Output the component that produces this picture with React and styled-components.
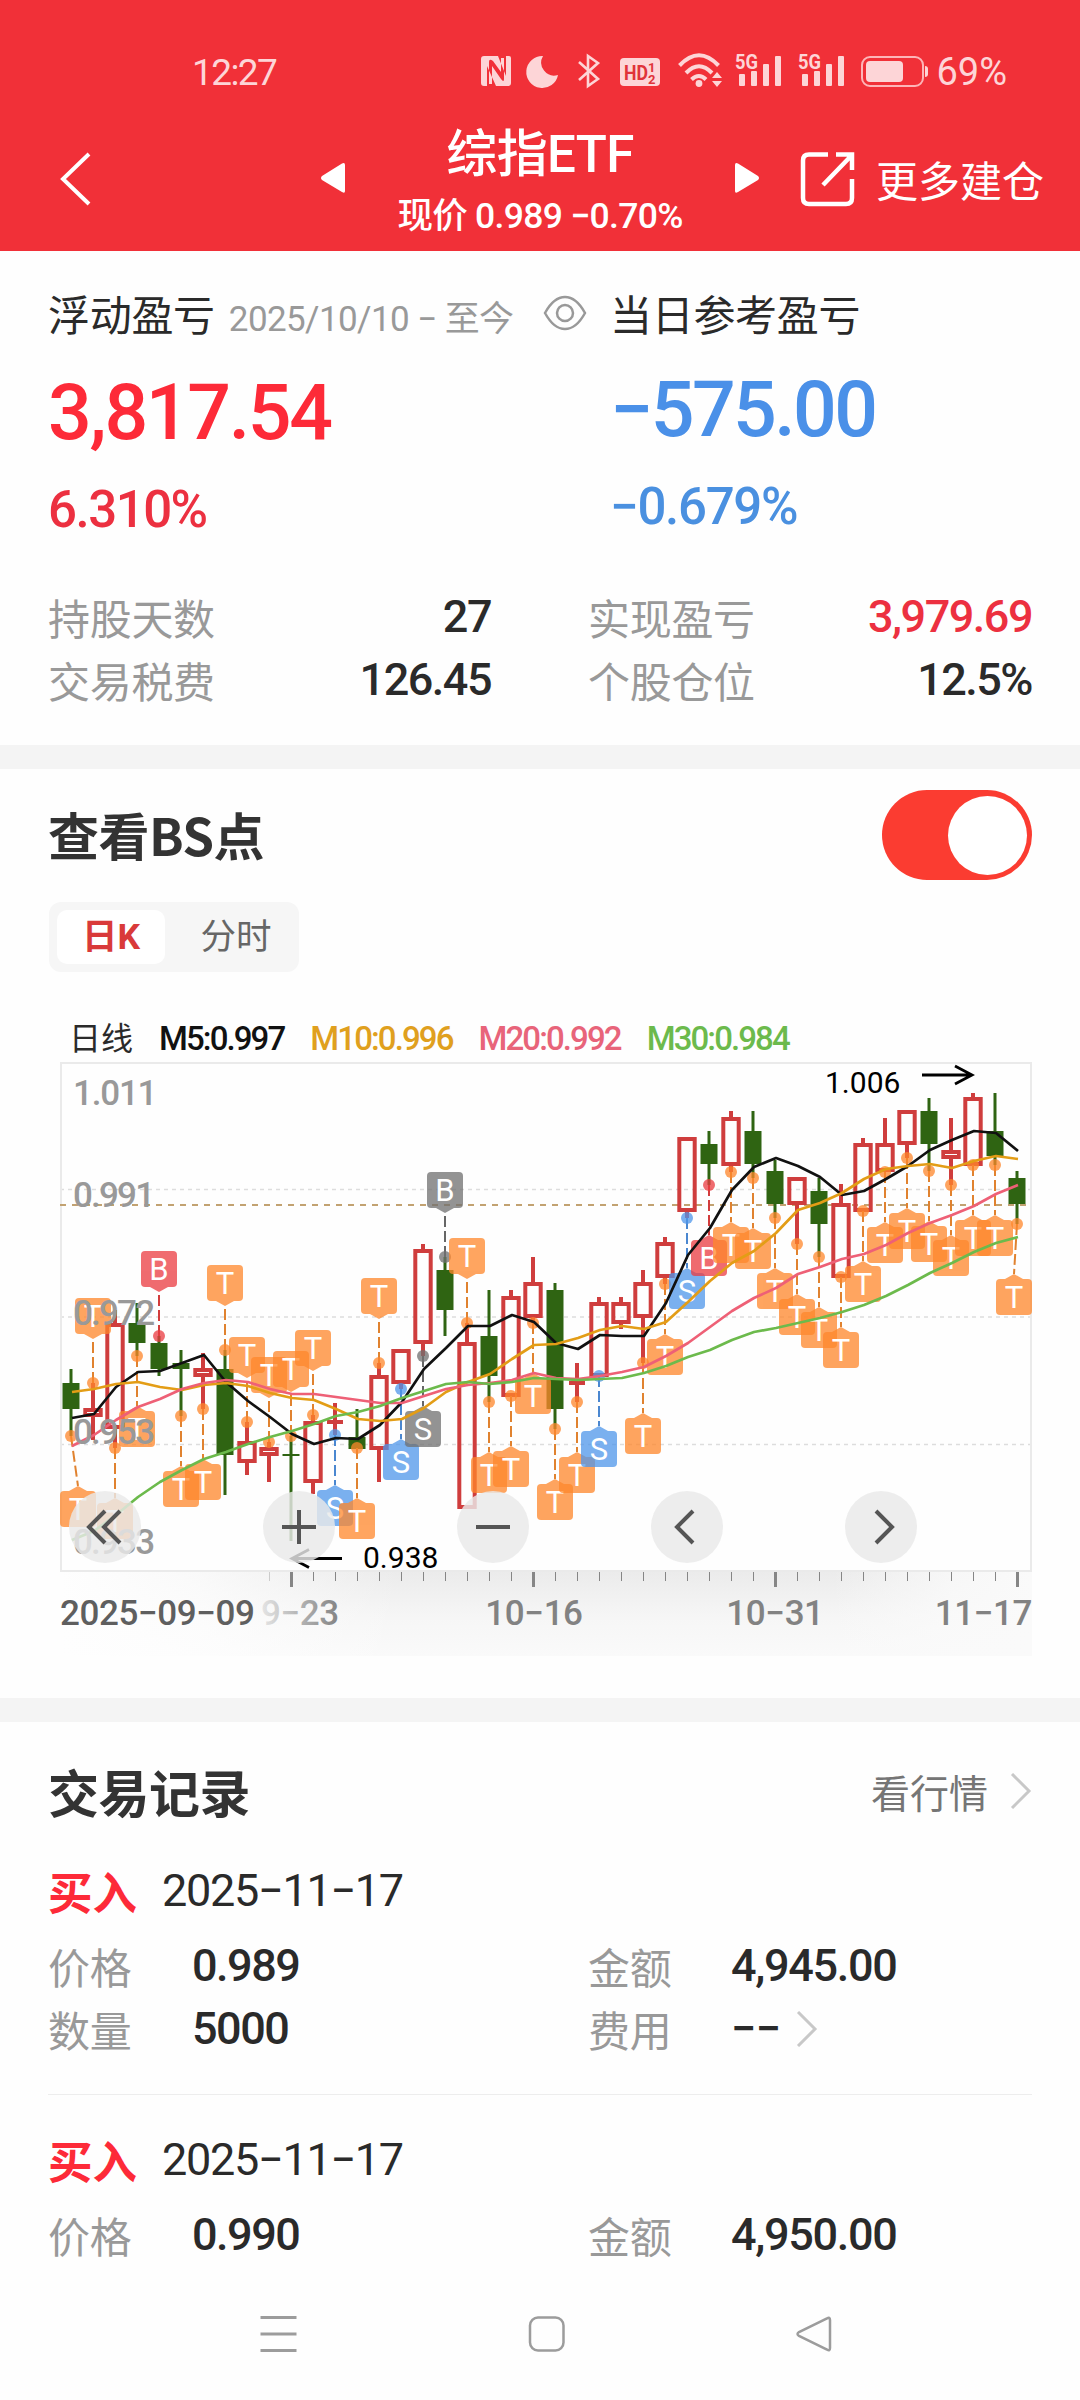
import React, { useState } from "react";
import styled, { createGlobalStyle } from "styled-components";

const GlobalStyle = createGlobalStyle`
  * {
    box-sizing: border-box;
  }
  body {
    margin: 0;
    background-color: #fff;
    font-family: "Noto Sans CJK SC", sans-serif;
    color: #2a2a2a;
  }
`;

const digits = `Roboto, "Noto Sans CJK SC", sans-serif`;

const Page = styled.div`
  width: 1080px;
  height: 2400px;
  display: flex;
  flex-direction: column;
  overflow: hidden;
  background-color: #fefefe;
`;

const Content = styled.main`
  flex: 1;
  overflow: hidden;
`;

const Num = styled.span`
  font-family: ${digits};
  font-size: ${({ $size }) => $size || 45}px;
  font-weight: ${({ $weight }) => $weight || 500};
  letter-spacing: ${({ $ls }) => $ls ?? -1.5}px;
  color: ${({ $color }) => $color || "#2a2a2a"};
  white-space: nowrap;
`;

/* header */

const Header = styled.header`
  height: 251px;
  background-color: #f13038;
  color: white;
`;

const StatusBar = styled.div`
  height: 92px;
  padding: 52px 73px 0 192px;
  display: flex;
  justify-content: space-between;
  align-items: center;
  color: #fdd5d7;
`;

const NavBar = styled.div`
  display: grid;
  grid-template-columns: 321px 24px 390px 24px 321px;
  height: 159px;
`;

const BackButton = styled.div`
  padding: 60px 0 0 60px;
`;

const Arrow = styled.div`
  padding-top: 70px;
`;

const TitleBlock = styled.div`
  display: flex;
  flex-direction: column;
  align-items: center;
  padding-top: 30px;
`;

const Title = styled.h1`
  margin: 0;
  font-family: ${digits};
  font-size: 51px;
  font-weight: 500;
  line-height: 66px;
  letter-spacing: -0.6px;
`;

const Subtitle = styled.div`
  font-family: ${digits};
  font-size: 35.5px;
  font-weight: 500;
  line-height: 57px;
  letter-spacing: -0.7px;
  white-space: pre;
`;

const More = styled.div`
  display: flex;
  align-items: center;
  gap: 21px;
  height: 54px;
  margin-top: 60px;
  padding-left: 41px;
  font-size: 42px;
  line-height: 54px;
  white-space: nowrap;
`;

/* sections */

const Section = styled.section`
  padding: ${({ $pad }) => $pad || "0 48px"};
`;

const Divider = styled.div`
  height: 24px;
  background-color: #f4f4f4;
`;

const Columns = styled.div`
  display: grid;
  grid-template-columns: 562px 1fr;
`;

const Head = styled.div`
  display: flex;
  align-items: center;
  height: 60px;
  font-size: 42px;
  line-height: 60px;
  letter-spacing: -0.3px;
  white-space: nowrap;
`;

const Period = styled.span`
  font-family: ${digits};
  font-size: 35px;
  color: #999;
  margin: 14px 30px 0 14px;
  letter-spacing: -0.6px;
`;

const Figure = styled.div`
  height: ${({ $h }) => $h}px;
  line-height: ${({ $h }) => $h + 4}px;
`;

const Stats = styled.div`
  display: grid;
  grid-template-columns: 443px 444px;
  column-gap: 97px;
  margin-top: 48px;
`;

const Stat = styled.div`
  display: flex;
  align-items: center;
  justify-content: space-between;
  height: 63px;
  line-height: 63px;
`;

const Label = styled.span`
  font-size: 42px;
  color: #999;
  letter-spacing: -0.3px;
  width: ${({ $w }) => ($w ? `${$w}px` : "auto")};
`;

const SectionHead = styled.div`
  display: flex;
  align-items: center;
  justify-content: space-between;
  height: ${({ $h }) => $h}px;
  line-height: ${({ $h }) => $h}px;
`;

const SectionTitle = styled.h2`
  margin: 0 0 2px;
  font-size: 51px;
  font-weight: 700;
  letter-spacing: -0.5px;
  color: #333;
`;

const Switch = styled.button`
  width: 150px;
  height: 90px;
  padding: 0 5px;
  border: none;
  border-radius: 45px;
  display: flex;
  align-items: center;
  justify-content: ${({ $on }) => ($on ? "flex-end" : "flex-start")};
  background-color: ${({ $on }) => ($on ? "#fb3c31" : "#ddd")};
  cursor: pointer;
`;

const Knob = styled.span`
  width: 79px;
  height: 79px;
  border-radius: 50%;
  background-color: white;
`;

const Tabs = styled.div`
  display: flex;
  width: 250px;
  height: 70px;
  margin: 22px 0 0 1px;
  padding: 8px;
  border-radius: 12px;
  background-color: #f6f6f6;
`;

const Tab = styled.button`
  flex: none;
  width: ${({ $active }) => ($active ? 108 : 142)}px;
  height: 54px;
  padding: 0;
  border: none;
  border-radius: 10px;
  font-family: ${digits};
  font-size: 35.5px;
  line-height: 55px;
  font-weight: ${({ $active }) => ($active ? 700 : 400)};
  color: ${({ $active }) => ($active ? "#d93a3a" : "#666")};
  background-color: ${({ $active }) => ($active ? "#fff" : "transparent")};
  cursor: pointer;
`;

const Legend = styled.div`
  display: flex;
  align-items: center;
  height: 50px;
  margin-top: 42px;
  padding-left: 21px;
  font-family: ${digits};
  font-size: 32px;
  line-height: 50px;
`;

const LegendItem = styled(Num)`
  margin-left: 26px;
`;

const ChartSvg = styled.svg`
  display: block;
  margin: -4px 0 0 2px;
`;

const MoreLink = styled.div`
  display: flex;
  align-items: center;
  gap: 22px;
  margin-bottom: 2px;
  font-size: 39px;
  color: #757575;
`;

const Record = styled.div`
  padding: 34px 0;
  border-bottom: 1px solid #ededed;
  &:last-child {
    border-bottom: none;
  }
`;

const RecordHead = styled.div`
  display: flex;
  align-items: center;
  gap: 25px;
  height: 62px;
  margin-bottom: 12px;
  line-height: 64px;
`;

const Side = styled.span`
  font-size: 44.5px;
  font-weight: 700;
  color: #fd2a38;
`;

const Fields = styled.div`
  display: grid;
  grid-template-columns: 540px 1fr;
`;

const Field = styled.div`
  display: flex;
  align-items: center;
  height: 63px;
  line-height: 63px;
`;

const SystemNav = styled.nav`
  display: flex;
  align-items: center;
  gap: 231px;
  height: 132px;
  padding-left: 260px;
`;

/* chart data: [up, high, low, body top, body bottom] */

const CANDLES = [
  [0, 329, 396, 343, 369], [1, 343, 400, 368, 377], [1, 270, 408, 283, 389],
  [0, 263, 316, 283, 303], [0, 296, 336, 303, 329], [0, 310, 376, 323, 329],
  [1, 313, 369, 328, 337], [0, 310, 455, 329, 415], [1, 382, 435, 401, 423],
  [1, 402, 442, 407, 416], [0, 396, 501, 414, 416], [1, 375, 454, 381, 443],
  [1, 363, 395, 381, 383], [0, 369, 408, 397, 409], [1, 323, 442, 335, 410],
  [1, 309, 349, 309, 344], [1, 204, 316, 209, 304], [0, 217, 296, 230, 270],
  [1, 283, 469, 302, 469], [0, 250, 362, 296, 336], [1, 250, 356, 256, 357],
  [1, 217, 283, 242, 278], [0, 243, 389, 250, 369], [1, 323, 362, 342, 344],
  [1, 257, 336, 262, 337], [1, 257, 289, 262, 284], [1, 230, 323, 242, 278],
  [1, 197, 244, 202, 238], [1, 97, 178, 97, 172], [0, 91, 145, 104, 124],
  [1, 71, 132, 77, 126], [0, 71, 138, 91, 124], [0, 120, 178, 131, 164],
  [1, 137, 204, 137, 165], [0, 138, 217, 151, 184], [1, 144, 237, 163, 238],
  [1, 98, 171, 103, 172], [1, 78, 132, 103, 132], [1, 70, 118, 70, 105],
  [0, 58, 131, 71, 104], [1, 78, 145, 110, 119], [1, 53, 125, 57, 126],
  [0, 53, 125, 91, 116], [0, 131, 184, 138, 164],
];

const LINES = [
  {
    color: "#111",
    ys: [378, 374, 347, 332, 331, 323, 315, 342, 361, 377, 394, 404, 398, 399, 385, 362, 329, 308, 286, 286, 275, 282, 303, 309, 295, 296, 296, 263, 215, 188, 150, 127, 118, 126, 137, 155, 151, 139, 126, 110, 100, 91, 93, 111],
  },
  {
    color: "#e39d16",
    ys: [352, 349, 344, 342, 347, 350, 345, 343, 346, 353, 358, 360, 369, 379, 381, 379, 368, 352, 342, 334, 319, 305, 304, 298, 290, 286, 289, 282, 262, 241, 223, 211, 193, 170, 163, 153, 139, 129, 126, 124, 128, 121, 116, 119],
  },
  {
    color: "#ee6076",
    ys: [406, 395, 380, 367, 359, 349, 343, 340, 342, 349, 354, 354, 357, 360, 363, 363, 356, 349, 345, 343, 340, 333, 338, 339, 336, 332, 327, 316, 303, 287, 271, 258, 248, 234, 227, 219, 214, 205, 193, 183, 175, 166, 154, 145],
  },
  {
    color: "#6cba4c",
    ys: [500, 491, 475, 457, 442, 430, 419, 412, 404, 397, 391, 384, 376, 372, 366, 358, 351, 344, 342, 344, 342, 338, 339, 340, 339, 338, 333, 326, 317, 310, 300, 292, 288, 283, 278, 272, 265, 256, 245, 233, 223, 212, 203, 197],
  },
];

// one letter per candle: upper case sits under the candle, lower case above it
const MARKS = "TtTTbTTttttt" + "STtSxytTTTTTS" + "-TTSBTTTTTTTTTTTTTT";

const KINDS = {
  T: { fill: "#ff872b", line: "#e0822f" },
  B: { fill: "#eb3b40", line: "#d23c3c" },
  S: { fill: "#4e96eb", line: "#4a87d0" },
  G: { fill: "#707070", line: "#666" },
};

const xAt = (i) => 21 + i * 22;

const readMark = (ch) => {
  if (ch === "-") return null;
  if (ch === "x") return { kind: "G", letter: "S", above: false };
  if (ch === "y") return { kind: "G", letter: "B", above: true };
  const letter = ch.toUpperCase();
  return { kind: letter, letter, above: ch !== letter };
};

const Candle = ({ i, data }) => {
  const [up, high, low, top, bottom] = data;
  const x = xAt(i);
  if (up) {
    return (
      <g stroke="#cf3d3d" strokeWidth="4" fill="none">
        {high < top && <path d={`M${x} ${high}V${top + 1}`} />}
        {low > bottom && <path d={`M${x} ${bottom - 1}V${low}`} />}
        {bottom - top < 4 ? (
          <path d={`M${x - 8} ${top + 1}h16`} />
        ) : (
          <rect x={x - 7.7} y={top + 2} width="15.4" height={bottom - top - 4} />
        )}
      </g>
    );
  }
  return (
    <g fill="#2f6412">
      <rect x={x - 1.5} y={high} width="3" height={low - high} />
      <rect x={x - 8.5} y={top} width="17" height={bottom - top} />
    </g>
  );
};

const Mark = ({ i, ch }) => {
  const mark = readMark(ch);
  if (!mark) return null;
  const { fill, line } = KINDS[mark.kind];
  const x = xAt(i);
  // boxes stay inside the frame
  const cx = Math.min(Math.max(x, 28), 964);
  const dot = mark.above ? CANDLES[i][1] : CANDLES[i][2];
  const top = mark.above ? dot - 85 : dot + 55;
  const tip = mark.above ? top + 41 : top - 5;
  const edge = mark.above ? top + 36 : top;
  return (
    <g>
      <path
        d={`M${x} ${dot}L${cx} ${tip}`}
        stroke={line}
        strokeWidth="2"
        strokeDasharray="11 4"
      />
      <g fill={fill} opacity="0.75">
        <circle cx={x} cy={dot} r="6" />
        <path d={`M${cx - 9} ${edge}L${cx} ${tip}L${cx + 9} ${edge}Z`} />
        <rect x={cx - 18} y={top} width="36" height="36" rx="4" />
      </g>
      <text
        x={cx}
        y={top + 29}
        textAnchor="middle"
        fontFamily="Roboto, sans-serif"
        fontSize="31"
        fill="#fff"
      >
        {mark.letter}
      </text>
    </g>
  );
};

const CircleButton = ({ cx, d }) => (
  <g>
    <circle cx={cx} cy="487" r="36" fill="#e9e9e9" fillOpacity="0.82" />
    <path
      d={d}
      transform={`translate(${cx} 487)`}
      fill="none"
      stroke="#555"
      strokeWidth="4"
    />
  </g>
);

const Chart = () => (
  <ChartSvg width="990" height="600" viewBox="0 20 990 600">
    <defs>
      <linearGradient id="axisShade" x1="0" y1="0" x2="0" y2="1">
        <stop offset="0" stopColor="#ebebeb" />
        <stop offset="0.55" stopColor="#f6f6f6" />
        <stop offset="1" stopColor="#fafafa" />
      </linearGradient>
      <linearGradient id="axisFade" x1="0" y1="0" x2="1" y2="0">
        <stop offset="0" stopColor="#fefefe" />
        <stop offset="0.4" stopColor="#fefefe" stopOpacity="0.75" />
        <stop offset="1" stopColor="#fefefe" stopOpacity="0" />
      </linearGradient>
      <linearGradient id="axisEnd" x1="0" y1="0" x2="1" y2="0">
        <stop offset="0" stopColor="#fafafa" stopOpacity="0" />
        <stop offset="0.6" stopColor="#fafafa" stopOpacity="0.8" />
        <stop offset="1" stopColor="#fafafa" />
      </linearGradient>
      <linearGradient
        id="dateFade"
        gradientUnits="userSpaceOnUse"
        x1="204"
        y1="0"
        x2="285"
        y2="0"
      >
        <stop offset="0" stopColor="#888" stopOpacity="0.1" />
        <stop offset="1" stopColor="#888" />
      </linearGradient>
    </defs>

    <rect x="10" y="531" width="972" height="85" fill="url(#axisShade)" />
    <rect x="10" y="531" width="340" height="85" fill="url(#axisFade)" />
    <rect x="782" y="531" width="200" height="85" fill="url(#axisEnd)" />

    <g stroke="#ddd" strokeWidth="1.3" strokeDasharray="4 4">
      <path d="M10 149.5H982" />
      <path d="M10 277H982" />
      <path d="M10 404.5H982" />
    </g>
    <rect
      x="11"
      y="23"
      width="970"
      height="508"
      fill="none"
      stroke="#eaeaea"
      strokeWidth="2"
    />
    <path
      d="M10 165H976"
      stroke="#c2a271"
      strokeWidth="2"
      strokeDasharray="6 6"
    />

    {CANDLES.map((c, i) => (
      <Candle key={i} i={i} data={c} />
    ))}
    {CANDLES.map((c, i) => (
      <Mark key={i} i={i} ch={MARKS[i]} />
    ))}
    {LINES.map(({ color, ys }) => (
      <polyline
        key={color}
        points={ys.map((y, i) => `${xAt(i) + 1},${y}`).join(" ")}
        fill="none"
        stroke={color}
        strokeWidth="2.7"
        strokeLinejoin="round"
      />
    ))}

    <g
      fontFamily="Roboto, sans-serif"
      fontSize="35"
      letterSpacing="-1.8"
      fill="#999"
      fontWeight="500"
    >
      <text x="23" y="65" letterSpacing="-1.2">1.011</text>
      <text x="23" y="167">0.991</text>
      <text x="23" y="285">0.972</text>
      <text x="23" y="404">0.953</text>
      <text x="23" y="514">0.933</text>
    </g>

    <g fontFamily="Roboto, sans-serif" fontSize="30" fill="#000">
      <text x="775" y="53">1.006</text>
      <text x="313" y="528">0.938</text>
    </g>
    <g fill="none" stroke="#000" strokeWidth="2.8">
      <path d="M872 35H922M905 26L922 35L905 44" />
      <path d="M292 518.5H242M259 509.500L242 518.5L259 527.5" />
    </g>

    <CircleButton cx={55} d="M0 -16L-16 0L0 16M15 -16L-1 0L15 16" />
    <CircleButton cx={249} d="M-17 0H17M0 -17V17" />
    <CircleButton cx={443} d="M-17 0H17" />
    <CircleButton cx={637} d="M6 -16L-10 0L6 16" />
    <CircleButton cx={831} d="M-5 -16L11 0L-5 16" />

    {CANDLES.map((c, i) => {
      if (i < 9) return null;
      const major = (i - 10) % 11 === 0;
      return (
        <path
          key={i}
          d={`M${xAt(i) + 0.5} 532V${major ? 547 : 541}`}
          stroke={i === 9 ? "#ccc" : "#868686"}
          strokeWidth={major ? 3 : 1}
        />
      );
    })}

    <g
      fontFamily="Roboto, sans-serif"
      fontSize="35"
      fontWeight="500"
      letterSpacing="-0.4"
      fill="#828282"
    >
      <text x="10" y="585" fill="#5f5f5f">2025−09−09</text>
      <text x="211" y="585" fill="url(#dateFade)">9−23</text>
      <text x="484" y="585" textAnchor="middle">10−16</text>
      <text x="725" y="585" textAnchor="middle">10−31</text>
      <text x="982" y="585" textAnchor="end">11−17</text>
    </g>
  </ChartSvg>
);

const StatusIcons = () => (
  <svg width="448" height="44" viewBox="480 50 448 44" fill="#fdd5d7">
    <path
      fillRule="evenodd"
      d="M484 56h14l8 20V56h3q2 0 2 2v25q0 3-3 3h-12l-9-20v20h-3q-3 0-3-3V59q0-3 3-3z M489 62v22h3V66l9 13q3 4 3 0V58h-3v14l-8-11q-4-3-4 1z"
    />
    <path d="M543 56a16 16 0 1 0 15 19a13 13 0 0 1-15-19z" />
    <path
      d="M579 62L598 79L588 86V56L598 63L579 80"
      fill="none"
      stroke="#fdd5d7"
      strokeWidth="2.600"
    />
    <rect x="620" y="58" width="40" height="28" rx="4" />
    <g fill="#e0333a" fontFamily="Roboto, sans-serif" fontWeight="700">
      <text x="624" y="80" fontSize="21" textLength="24" lengthAdjust="spacingAndGlyphs">HD</text>
      <text x="648" y="71.500" fontSize="13">1</text>
      <text x="648" y="83.500" fontSize="13">2</text>
    </g>
    <g fill="none" stroke="#fdd5d7" strokeWidth="4">
      <path d="M679.500 65.500Q699 45 718.500 65.500" />
      <path d="M686 73Q699 59.500 712 73" />
      <path d="M691.500 79.500Q699 72.500 706 79.500" />
    </g>
    <circle cx="699" cy="83.500" r="3.400" />
    <path d="M717 72l5 6h-10zM717 87l5-6h-10z" />
    {[735, 798].map((x) => (
      <g key={x}>
        <text
          x={x}
          y="69"
          fontSize="20"
          fontFamily="Roboto, sans-serif"
          fontWeight="700"
          textLength="23"
          lengthAdjust="spacingAndGlyphs"
        >
          5G
        </text>
        <rect x={x + 4} y="74" width="6" height="12" rx="1" />
        <rect x={x + 16} y="71" width="6" height="15" rx="1" />
        <rect x={x + 28} y="64" width="6" height="22" rx="1" />
        <rect x={x + 40} y="56" width="6" height="30" rx="1" />
      </g>
    ))}
    <rect
      x="862"
      y="57"
      width="61"
      height="29"
      rx="8"
      fill="none"
      stroke="#fdb5b8"
      strokeWidth="2"
    />
    <rect x="866" y="61" width="37" height="21" rx="4" />
    <path d="M925 66q3 0 3 3v5q0 3-3 3z" />
  </svg>
);

const StatusRight = styled.div`
  display: flex;
  align-items: center;
  gap: 8px;
  height: 40px;
`;

const Eye = () => (
  <svg width="44" height="36" viewBox="0 0 44 36" fill="none" stroke="#999" strokeWidth="2.500">
    <path d="M2 18C8 7 15 2 22 2S36 7 42 18C36 29 29 34 22 34S8 29 2 18Z" />
    <circle cx="22" cy="18" r="8" />
  </svg>
);

const ChevronRight = () => (
  <svg width="22" height="36" viewBox="0 0 22 36" fill="none" stroke="#c8c8c8" strokeWidth="3">
    <path d="M2 1L19 18L2 35" />
  </svg>
);

const FeeArrow = styled.span`
  display: flex;
  margin-left: 15px;
`;

const stats = [
  { label: "持股天数", value: "27" },
  { label: "实现盈亏", value: "3,979.69", color: "#ec3040" },
  { label: "交易税费", value: "126.45" },
  { label: "个股仓位", value: "12.5%" },
];

const legend = [
  { text: "M5:0.997", color: "#111" },
  { text: "M10:0.996", color: "#e0a01e" },
  { text: "M20:0.992", color: "#e8647a" },
  { text: "M30:0.984", color: "#6cba4c" },
];

const records = [
  { price: "0.989", amount: "4,945.00", count: "5000", fee: "−−" },
  { price: "0.990", amount: "4,950.00" },
];

const App = () => {
  const [showPoints, setShowPoints] = useState(true);

  return (
    <Page>
      <GlobalStyle />
      <Header>
        <StatusBar>
          <Num $size={37} $weight={400} $ls={-1.6} $color="#fdd5d7">12:27</Num>
          <StatusRight>
            <StatusIcons />
            <Num $size={38} $weight={400} $ls={0} $color="#fdd5d7">69%</Num>
          </StatusRight>
        </StatusBar>
        <NavBar>
          <BackButton>
            <svg width="32" height="54" viewBox="0 0 32 54" fill="none" stroke="#fff" strokeWidth="4">
              <path d="M29 2L3 27L29 52" />
            </svg>
          </BackButton>
          <Arrow>
            <svg width="24" height="32" viewBox="0 0 24 32" fill="#fff">
              <path d="M21 1.500Q24 0 24 3V29Q24 32 21 30L1 18Q-1 16 1 14Z" />
            </svg>
          </Arrow>
          <TitleBlock>
            <Title>综指ETF</Title>
            <Subtitle>现价 0.989 −0.70%</Subtitle>
          </TitleBlock>
          <Arrow>
            <svg width="24" height="32" viewBox="0 0 24 32" fill="#fff">
              <path d="M3 1.500Q0 0 0 3V29Q0 32 3 30L23 18Q25 16 23 14Z" />
            </svg>
          </Arrow>
          <More>
            <svg width="55" height="55" viewBox="0 0 55 55" fill="none" stroke="#fff" strokeWidth="4.500">
              <path d="M28 2.500H9Q3 2.500 3 8.500V46Q3 52 9 52H46Q52 52 52 46V27" />
              <path d="M36 2.500H52V18M51 4L23 33" />
            </svg>
            更多建仓
          </More>
        </NavBar>
      </Header>
      <Content>
        <Section $pad="32px 48px 34px">
          <Columns>
            <div>
              <Head>
                浮动盈亏
                <Period>2025/10/10 − 至今</Period>
                <Eye />
              </Head>
              <Figure $h={136}>
                <Num $size={77} $ls={-2.300} $color="#fd2a38">3,817.54</Num>
              </Figure>
              <Figure $h={58}>
                <Num $size={51} $ls={-1.500} $color="#ec3040">6.310%</Num>
              </Figure>
            </div>
            <div>
              <Head>当日参考盈亏</Head>
              <Figure $h={130}>
                <Num $size={77} $ls={-2.600} $color="#4a90e8">−575.00</Num>
              </Figure>
              <Figure $h={64}>
                <Num $size={51} $ls={-1.300} $color="#4a90e0">−0.679%</Num>
              </Figure>
            </div>
          </Columns>
          <Stats>
            {stats.map(({ label, value, color }) => (
              <Stat key={label}>
                <Label>{label}</Label>
                <Num $color={color}>{value}</Num>
              </Stat>
            ))}
          </Stats>
        </Section>
        <Divider />
        <Section $pad="21px 48px 38px">
          <SectionHead $h={90}>
            <SectionTitle>查看BS点</SectionTitle>
            <Switch $on={showPoints} onClick={() => setShowPoints(!showPoints)}>
              <Knob />
            </Switch>
          </SectionHead>
          <Tabs>
            <Tab $active>日K</Tab>
            <Tab>分时</Tab>
          </Tabs>
          <Legend>
            日线
            {legend.map(({ text, color }) => (
              <LegendItem key={text} $size={33} $ls={-1.900} $color={color}>
                {text}
              </LegendItem>
            ))}
          </Legend>
          <Chart />
        </Section>
        <Divider />
        <Section $pad="36px 48px 0">
          <SectionHead $h={68}>
            <SectionTitle>交易记录</SectionTitle>
            <MoreLink>
              看行情
              <ChevronRight />
            </MoreLink>
          </SectionHead>
          {records.map(({ price, amount, count, fee }) => (
            <Record key={price}>
              <RecordHead>
                <Side>买入</Side>
                <Num $weight={400} $ls={-1.300}>2025−11−17</Num>
              </RecordHead>
              <Fields>
                <Field>
                  <Label $w={144}>价格</Label>
                  <Num>{price}</Num>
                </Field>
                <Field>
                  <Label $w={143}>金额</Label>
                  <Num $ls={-1.300}>{amount}</Num>
                </Field>
                {count && (
                  <>
                    <Field>
                      <Label $w={144}>数量</Label>
                      <Num>{count}</Num>
                    </Field>
                    <Field>
                      <Label $w={143}>费用</Label>
                      <Num $ls={-0.500}>{fee}</Num>
                      <FeeArrow>
                        <ChevronRight />
                      </FeeArrow>
                    </Field>
                  </>
                )}
              </Fields>
            </Record>
          ))}
        </Section>
      </Content>
      <SystemNav>
        <svg width="37" height="36" viewBox="0 0 37 36" stroke="#9c9c9c" strokeWidth="3">
          <path d="M0.500 1.500H36.500M0.500 18H36.500M0.500 34.500H36.500" />
        </svg>
        <svg width="37" height="36" viewBox="0 0 37 36" fill="none" stroke="#9c9c9c" strokeWidth="2.500">
          <rect x="2" y="1.500" width="33.500" height="33" rx="8" />
        </svg>
        <svg width="37" height="36" viewBox="0 0 37 36" fill="none" stroke="#9c9c9c" strokeWidth="2.500">
          <path d="M31 2.500Q34 0.500 34 4V32Q34 35.500 31 33.500L3 20Q0 18 3 16Z" />
        </svg>
      </SystemNav>
    </Page>
  );
};

export default App;
